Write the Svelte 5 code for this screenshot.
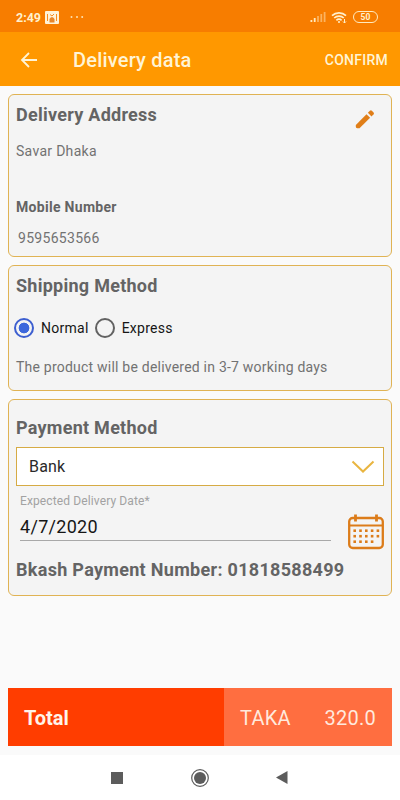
<script lang="ts">
  const shippingOptions = [
    { id: "normal", name: "Normal" },
    { id: "express", name: "Express" },
  ];

  const signalBars = [2, 4, 6, 8, 10];

  // five dots a row, the last row is one short
  const calendarDots = Array.from({ length: 14 }, (_, i) => ({
    x: 6 + (i % 5) * 5.8,
    y: 16 + Math.floor(i / 5) * 5.5,
  }));

  let shipping = $state("normal");
</script>

<div class="screen">
  <div class="status-bar">
    <span class="time">2:49</span>
    <svg class="app-badge" width="14" height="13" viewBox="0 0 14 13">
      <rect width="14" height="13" rx="1" fill="#fff3d8" />
      <path d="M2.5 3v7M11.5 3v7" stroke="#f98c20" />
      <path d="M4.5 11.5V8L6 6.3h2L9.5 8v3.5z" fill="#e8862a" />
      <path d="M5 3.5l2 1.5 2-2" fill="none" stroke="#f98c20" />
    </svg>
    <svg class="more" width="14" height="4" viewBox="0 0 14 4" fill="#ffe2b0">
      <circle cx="1.5" cy="2" r="1" />
      <circle cx="7" cy="2" r="1" />
      <circle cx="12.2" cy="2" r="1" />
    </svg>
    <svg class="signal" width="16" height="12" viewBox="0 0 16 12">
      {#each signalBars as height, i}
        <rect x={0.5 + i * 3.3} y={11 - height} width="1.8" {height} fill="#ffe9bd" opacity={i < 2 ? 1 : 0.5} />
      {/each}
    </svg>
    <svg class="wifi" width="17" height="13" viewBox="0 0 17 13" fill="none" stroke="#fff0cc" stroke-width="1.7">
      <path d="M1 4.6a10.2 10.2 0 0 1 14 0M3.2 7a7 7 0 0 1 9.6 0M5.4 9.3a3.8 3.8 0 0 1 5.2 0" />
      <circle cx="8" cy="11" r="1" fill="#fff0cc" stroke="none" />
      <path d="M13.5 8v4M12 10.5l1.5 1.5 1.5-1.5" stroke-width="1" />
    </svg>
    <span class="battery">50</span>
  </div>

  <header class="app-bar">
    <svg width="18" height="16" viewBox="0 0 18 16" fill="none" stroke="#fff4d6" stroke-width="1.8">
      <path d="M17 8H2M9 1L2 8l7 7" />
    </svg>
    <h1>Delivery data</h1>
    <button class="confirm">CONFIRM</button>
  </header>

  <main>
    <section class="card address">
      <div class="card-head">
        <h2>Delivery Address</h2>
        <svg width="20" height="20" viewBox="0 0 20 20" fill="#e07e18">
          <path d="M.8 15.9L11.5 5.2l3.6 3.6L4.5 19.2H2.2Q.8 19.2.8 17.8z" />
          <path d="M12.9 3.8l2-2q1-.9 2 0l1.7 1.7q.8.9 0 1.8l-2.1 2.1z" />
        </svg>
      </div>
      <p class="street">Savar Dhaka</p>
      <h3>Mobile Number</h3>
      <p class="phone">9595653566</p>
    </section>

    <section class="card shipping">
      <h2>Shipping Method</h2>
      <div class="options">
        {#each shippingOptions as option}
          <label class="option">
            <input type="radio" name="shipping" value={option.id} bind:group={shipping} />
            <span>{option.name}</span>
          </label>
        {/each}
      </div>
      <p class="note">The product will be delivered in 3-7 working days</p>
    </section>

    <section class="card payment">
      <h2>Payment Method</h2>
      <div class="select">
        <span>Bank</span>
        <svg width="24" height="14" viewBox="0 0 24 14" fill="none" stroke="#e9b540" stroke-width="2">
          <path d="M1.5 1.5L12 11.5l10.5-10" />
        </svg>
      </div>
      <div class="date-row">
        <div class="date-field">
          <span class="date-label">Expected Delivery Date*</span>
          <span class="date-value">4/7/2020</span>
        </div>
        <svg class="calendar" width="36" height="36" viewBox="0 0 36 36" fill="none" stroke="#dc7c1a">
          <rect x="1.2" y="4" width="33.6" height="30" rx="3.5" stroke-width="2.3" />
          <path d="M1 11.5h34" stroke-width="2" />
          <path d="M7.5 .5v7M28.5 .5v7" stroke-width="2.8" />
          {#each calendarDots as dot}
            <rect x={dot.x - 0.6} y={dot.y - 0.6} width="2.6" height="2.6" fill="#dc7c1a" stroke="none" />
          {/each}
        </svg>
      </div>
      <h2 class="bkash">Bkash Payment Number: 01818588499</h2>
    </section>

    <div class="total">
      <div class="total-label">Total</div>
      <div class="total-value">
        <span class="currency">TAKA</span>
        <span class="amount">320.0</span>
      </div>
    </div>
  </main>

  <nav class="nav-bar">
    <svg width="12" height="12" viewBox="0 0 12 12" fill="#5c5c5c">
      <rect width="12" height="12" />
    </svg>
    <svg width="18" height="18" viewBox="0 0 18 18">
      <circle cx="9" cy="9" r="8.3" fill="none" stroke="#5c5c5c" stroke-width="1.2" />
      <circle cx="9" cy="9" r="6" fill="#5c5c5c" />
    </svg>
    <svg width="12" height="13" viewBox="0 0 12 13" fill="#5c5c5c">
      <path d="M0 6.5L11.5 0v13z" />
    </svg>
  </nav>
</div>

<style>
  :global(body) {
    margin: 0;
  }

  .screen {
    display: flex;
    flex-direction: column;
    width: 400px;
    height: 800px;
    background: #fafafa;
    font-family: Roboto, "Liberation Sans", sans-serif;
    color: #646464;
  }

  .screen * {
    box-sizing: border-box;
  }

  h1,
  h2,
  h3,
  p {
    margin: 0;
    white-space: nowrap;
  }

  svg {
    display: block;
    flex: none;
  }

  .status-bar {
    display: flex;
    align-items: center;
    height: 32px;
    padding: 2px 22px 0 16px;
    background: #f77d00;
  }

  .time {
    width: 29px;
    font-size: 12.5px;
    font-weight: 700;
    color: #fff0cc;
  }

  .more {
    margin-left: 11px;
  }

  .signal {
    margin-left: auto;
  }

  .wifi {
    margin-left: 5px;
  }

  .battery {
    width: 25px;
    height: 12px;
    margin-left: 5px;
    border: 1px solid #ffeabf;
    border-radius: 6px;
    font-size: 8.5px;
    line-height: 10px;
    font-weight: 700;
    text-align: center;
    color: #fff0cc;
  }

  .app-bar {
    display: flex;
    align-items: center;
    height: 54px;
    padding: 2px 12px 0 20px;
    background: #ff9800;
    color: #fff4d6;
  }

  h1 {
    margin-left: 35px;
    font-size: 20px;
    font-weight: 500;
    letter-spacing: 0.2px;
  }

  .confirm {
    margin-left: auto;
    padding: 0;
    border: 0;
    background: none;
    font: 500 14px Roboto, "Liberation Sans", sans-serif;
    letter-spacing: 0.25px;
    color: inherit;
  }

  main {
    display: flex;
    flex-direction: column;
    flex: 1;
    gap: 8px;
    padding: 8px 8px 9px;
  }

  .card {
    border: 1px solid #e0b354;
    border-radius: 6px;
    background: #f4f4f4;
    padding: 0 7px;
  }

  h2 {
    font-size: 18px;
    line-height: 24px;
    font-weight: 700;
    letter-spacing: 0.26px;
  }

  p {
    font-size: 14px;
    line-height: 20px;
    letter-spacing: 0.3px;
    color: #727272;
  }

  .address {
    height: 163px;
    padding-top: 8px;
  }

  .card-head {
    display: flex;
    justify-content: space-between;
    padding-right: 9px;
  }

  .card-head svg {
    margin-top: 6px;
  }

  .street {
    margin-top: 12px;
  }

  h3 {
    margin-top: 36px;
    font-size: 14px;
    line-height: 20px;
    font-weight: 700;
    letter-spacing: 0.3px;
  }

  .phone {
    margin: 11px 0 0 2px;
  }

  .shipping {
    height: 126px;
    padding-top: 8px;
  }

  .options {
    display: flex;
    gap: 6px;
    margin: 20px 0 0 -2px;
  }

  .option {
    display: flex;
    align-items: center;
    height: 20px;
    font-size: 14px;
    letter-spacing: 0.27px;
    color: #161616;
  }

  .option input {
    appearance: none;
    width: 20px;
    height: 20px;
    margin: 0 7px 0 0;
    border: 2px solid #626262;
    border-radius: 50%;
  }

  .option input:checked {
    border-color: #3d5fd0;
    background: radial-gradient(circle, #3d68dc 5px, transparent 5.7px);
  }

  .note {
    margin-top: 19px;
    letter-spacing: 0.22px;
  }

  .payment {
    height: 197px;
    padding-top: 16px;
  }

  .select {
    display: flex;
    align-items: center;
    justify-content: space-between;
    height: 39px;
    margin-top: 7px;
    padding: 0 8px 0 12px;
    border: 1px solid #d6ab44;
    background: #fff;
    font-size: 16px;
    letter-spacing: 0.2px;
    color: #2a2a2a;
  }

  .date-row {
    display: flex;
    justify-content: space-between;
    height: 64px;
    padding-left: 4px;
  }

  .date-field {
    display: flex;
    flex-direction: column;
    width: 311px;
    height: 55px;
    padding-top: 7px;
    border-bottom: 1px solid #a8a8a8;
  }

  .date-label {
    font-size: 12px;
    line-height: 16px;
    letter-spacing: 0.12px;
    color: #a2a2a2;
  }

  .date-value {
    margin-top: 6px;
    font-size: 18px;
    line-height: 24px;
    letter-spacing: 0.3px;
    color: #161616;
  }

  .calendar {
    margin-top: 28px;
  }

  .bkash {
    margin-top: 8px;
    letter-spacing: 0.3px;
  }

  .total {
    display: flex;
    height: 58px;
    margin-top: auto;
    font-size: 20px;
    line-height: 60px;
  }

  .total-label {
    width: 216px;
    padding-left: 16px;
    background: #ff3d00;
    font-weight: 700;
    color: #fff4ea;
  }

  .total-value {
    display: flex;
    flex: 1;
    justify-content: space-between;
    padding: 0 16px;
    background: #ff6e40;
    letter-spacing: 0.25px;
    color: #ffe9dd;
  }

  .nav-bar {
    display: flex;
    align-items: center;
    justify-content: space-between;
    height: 45px;
    padding: 0 112px 0 111px;
    background: #fff;
  }
</style>
